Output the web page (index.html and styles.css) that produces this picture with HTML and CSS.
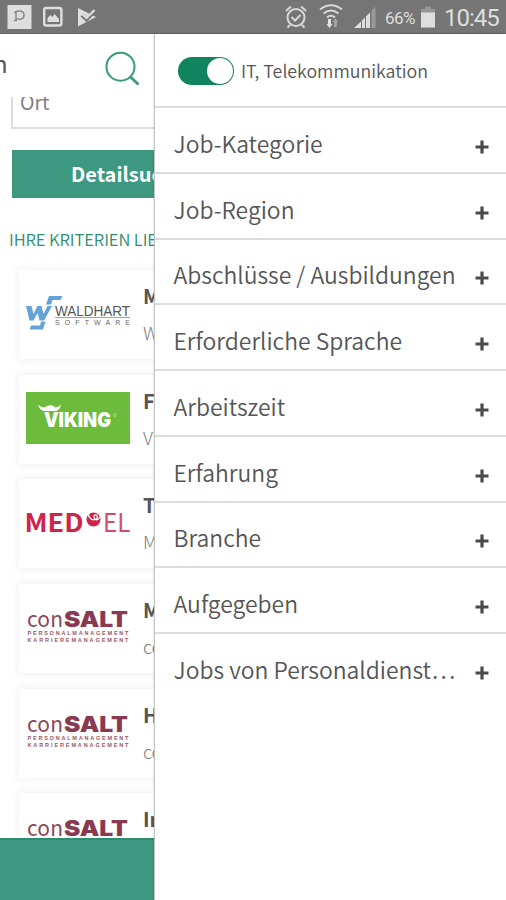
FILE: index.html
```html
<!DOCTYPE html>
<html lang="de">
<head>
    <meta charset="UTF-8">
    <meta name="viewport" content="width=device-width, initial-scale=1.0">
    <title>Jobs</title>
    <link rel="stylesheet" href="styles.css">
</head>
<body>
<svg class="symbols" width="0" height="0">
    <symbol id="plus" viewBox="0 0 14 14">
        <path d="M7 0.5V13.5M0.5 7H13.5" stroke="#4a4a4a" stroke-width="3.2" fill="none"/>
    </symbol>
    <symbol id="consalt" viewBox="0 0 104 52">
        <text x="1" y="25.5" class="con" textLength="36">con</text>
        <text x="38" y="25.5" class="salt" textLength="64" lengthAdjust="spacingAndGlyphs">SALT</text>
        <text x="1.5" y="34" class="salt-sub" textLength="101">PERSONALMANAGEMENT</text>
        <text x="1.5" y="41" class="salt-sub" textLength="101">KARRIEREMANAGEMENT</text>
    </symbol>
</svg>

<div class="statusbar">
    <svg class="status-left" width="100" height="33" viewBox="0 0 100 33">
        <rect x="7.5" y="5" width="24" height="24" fill="#dedede"/>
        <path d="M14 20.500h3M16 20.500V12.500M14.500 13c1-2 9.500-4 9.500 2.200c0 4.300-4.800 4.800-7 3.300" fill="none" stroke="#8a8a8a" stroke-width="1.500"/>
        <rect x="44.200" y="8" width="17.200" height="17.500" rx="2" fill="none" stroke="#dedede" stroke-width="2.400"/>
        <path d="M47.500 22v-4l3-3l2 2l2-3l4.500 5v3z" fill="#dedede"/>
        <path d="M78 8l18 9l-18 9.500z" fill="#dedede"/>
        <path d="M82 15l4.500 4.500l8.500-9" fill="none" stroke="#757575" stroke-width="4"/>
        <path d="M82 14l4.500 4l8-8" fill="none" stroke="#dedede" stroke-width="2.200"/>
    </svg>
    <div class="status-right">
        <svg width="98" height="33" viewBox="280 0 98 33">
            <g fill="none" stroke="#d8d8d8" stroke-width="2">
                <circle cx="296" cy="17.500" r="8.500"/>
                <path d="M291.500 17l3.500 3.500l5.500-5.500M286 11l5-4.500M306 11l-5-4.500M290 25l-2.500 2.500M302 25l2.500 2.500"/>
                <path d="M320 9.500q11-8.500 22 0M323.500 13.500q7.500-6 15 0M327 17.500q4-3.500 8 0"/>
            </g>
            <path d="M328 19h3v5h1.500l-3 4l-3-4h1.500z" fill="#e2e2e2"/>
            <path d="M334 27v-5h-1l2.500-3.500l2.500 3.500h-1.200v5z" fill="#a5a5a5"/>
            <path d="M354 28l7-6.500V28z M362 28v-7.500l3-3V28z M366 28V16.500l4-4V28z" fill="#dedede"/>
            <path d="M371.500 28V11l4-4.500V28z" fill="#999"/>
        </svg>
        <span class="percent">66%</span>
        <svg width="16" height="33" viewBox="419 0 16 33">
            <path d="M420 13V9h4V6.500h6V9h4v4z" fill="#959595"/>
            <rect x="420" y="12.500" width="14" height="15" fill="#dedede"/>
        </svg>
        <span class="time">10:45</span>
    </div>
</div>

<div class="screen">
    <div class="page">
        <div class="header">
            <span class="title">n</span>
            <svg class="search" width="36" height="36" viewBox="0 0 36 36">
                <circle cx="16.500" cy="15.700" r="14" fill="none" stroke="#379b7e" stroke-width="2"/>
                <path d="M26 25.500l8.500 8" stroke="#379b7e" stroke-width="2.800"/>
            </svg>
        </div>
        <div class="content">
            <div class="field">Ort</div>
            <div class="detail-btn">Detailsuche</div>
            <div class="result-title">IHRE KRITERIEN LIEFERN</div>

            <div class="card">
                <svg class="logo" width="104" height="52" viewBox="0 0 104 52">
                    <g fill="#65a2d7">
                        <path d="M0 19h5.500l2 8l4-8h4l2 8l4-8h4.500l-8 14.500h-4.500l-2-7.500l-4 7.500h-4z"/>
                        <path d="M23 9h13.500l-2 4h-8l-1.500 4.500h-5z"/>
                        <path d="M3.500 42.500l1.500-4h9l1-4h4.500l-2.500 8z"/>
                    </g>
                    <text x="29" y="29" class="waldhart" textLength="75" lengthAdjust="spacingAndGlyphs">WALDHART</text>
                    <path d="M29 30.500h75" stroke="#888" stroke-width="0.800"/>
                    <text x="29" y="37.500" class="software" textLength="75">SOFTWARE</text>
                </svg>
                <div class="job"><b>Mitarbeiter</b><span>Waldhart</span></div>
            </div>

            <div class="card">
                <svg class="logo" width="104" height="52" viewBox="0 0 104 52">
                    <rect width="104" height="52" fill="#6cbb3c"/>
                    <path d="M12 12.500c2 2 4 3 7 3c3-3 8-3 10 0c2 0 4-1 6-3c-1 4-2 5.500-5 6.500h-12c-3-1-5-2.500-6-6.500z" fill="#fff"/>
                    <text x="18" y="34.500" class="viking" textLength="67" lengthAdjust="spacingAndGlyphs">VIKING</text>
                    <circle cx="89" cy="23" r="1.500" fill="none" stroke="#c4e4b1" stroke-width="0.600"/>
                </svg>
                <div class="job"><b>Filialleiter</b><span>Viking</span></div>
            </div>

            <div class="card">
                <svg class="logo" width="104" height="52" viewBox="0 0 104 52">
                    <text x="-1.500" y="35.500" class="med" textLength="59" lengthAdjust="spacingAndGlyphs">MED</text>
                    <circle cx="67.500" cy="23.500" r="7" fill="#cf2349"/>
                    <path d="M62 17.500c1 5 4 7 7 6c3-1 3-4 1-4.500s-3 2-1 4s4 0 6-4" fill="none" stroke="#fff" stroke-width="1.300"/>
                    <text x="77" y="35.500" class="el" textLength="27.500" lengthAdjust="spacingAndGlyphs">EL</text>
                </svg>
                <div class="job"><b>Techniker</b><span>MED-EL</span></div>
            </div>

            <div class="card">
                <svg class="logo" width="104" height="52"><use href="#consalt"/></svg>
                <div class="job"><b>Mitarbeiter</b><span>conSALT</span></div>
            </div>

            <div class="card">
                <svg class="logo" width="104" height="52"><use href="#consalt"/></svg>
                <div class="job"><b>Hotel</b><span>conSALT</span></div>
            </div>

            <div class="card">
                <svg class="logo" width="104" height="52"><use href="#consalt"/></svg>
                <div class="job"><b>Ingenieur</b><span>conSALT</span></div>
            </div>
        </div>
        <div class="footer"></div>
    </div>

    <div class="filter">
        <div class="toggle-row">
            <div class="toggle"><div class="knob"></div></div>
            <span class="toggle-label">IT, Telekommunikation</span>
        </div>
        <div class="row"><span>Job-Kategorie</span><svg class="plus"><use href="#plus"/></svg></div>
        <div class="row"><span>Job-Region</span><svg class="plus"><use href="#plus"/></svg></div>
        <div class="row"><span>Abschlüsse / Ausbildungen</span><svg class="plus"><use href="#plus"/></svg></div>
        <div class="row"><span>Erforderliche Sprache</span><svg class="plus"><use href="#plus"/></svg></div>
        <div class="row"><span>Arbeitszeit</span><svg class="plus"><use href="#plus"/></svg></div>
        <div class="row"><span>Erfahrung</span><svg class="plus"><use href="#plus"/></svg></div>
        <div class="row"><span>Branche</span><svg class="plus"><use href="#plus"/></svg></div>
        <div class="row"><span>Aufgegeben</span><svg class="plus"><use href="#plus"/></svg></div>
        <div class="row"><span>Jobs von Personaldienst…</span><svg class="plus"><use href="#plus"/></svg></div>
    </div>
</div>
</body>
</html>
```
FILE: styles.css
```css
* {
    box-sizing: border-box;
}
body {
    margin: 0;
    height: 900px;
    overflow: hidden;
    background-color: white;
    font-family: "Noto Sans CJK SC", "Open Sans", sans-serif;
    color: #555;
}
.symbols {
    display: block;
}
svg {
    flex-shrink: 0;
}

/* status bar */
.statusbar {
    display: flex;
    justify-content: space-between;
    height: 34px;
    background-color: #757575;
    border-bottom: 1px solid #666;
    color: #dedede;
    font-family: Roboto, sans-serif;
}
.status-right {
    display: flex;
    line-height: 36px;
    padding-right: 7px;
}
.percent {
    width: 35px;
    margin-left: 7px;
    font-size: 17px;
    letter-spacing: -0.6px;
}
.time {
    width: 55px;
    margin-left: 8px;
    font-size: 24px;
    letter-spacing: -1px;
    white-space: nowrap;
}

.screen {
    display: flex;
    height: 866px;
}

/* page behind the filter */
.page {
    display: flex;
    flex-direction: column;
    width: 154px;
    overflow: hidden;
}
.header {
    display: flex;
    justify-content: space-between;
    height: 63px;
    flex-shrink: 0;
    padding: 17px 14px 0 0;
}
.title {
    font-size: 24px;
    line-height: 24px;
    margin-left: -7px;
}
.content {
    flex: 1;
    overflow: hidden;
    width: 480px;
}
.field {
    height: 32px;
    margin-left: 11px;
    padding-left: 7px;
    border-left: 2px solid #ddd;
    border-bottom: 2px solid #ddd;
    font-size: 19.500px;
    line-height: 9px;
    color: #808080;
}
.detail-btn {
    height: 48px;
    margin: 21px 0 0 12px;
    padding-left: 59px;
    background-color: #3c987e;
    color: white;
    font-size: 20px;
    font-weight: bold;
    line-height: 47px;
}
.result-title {
    margin: 29px 0 18px 9px;
    font-size: 16.600px;
    font-weight: 350;
    line-height: 25px;
    letter-spacing: -0.1px;
    color: #2a8f6e;
}
.card {
    display: flex;
    height: 89px;
    margin: 0 0 15.700px 19px;
    padding: 17px 0 0 7px;
    background-color: white;
    box-shadow: 0 0 8px 2px rgba(0, 0, 0, 0.05);
}
.job {
    display: flex;
    flex-direction: column;
    margin: -1px 0 0 13px;
}
.job b {
    font-size: 20px;
    line-height: 20px;
    color: #555;
}
.job span {
    margin-top: 16px;
    font-size: 18px;
    font-weight: 300;
    line-height: 20px;
    color: #808080;
}
.footer {
    height: 62px;
    flex-shrink: 0;
    background-color: #3c987e;
    border-top: 2px solid #2f8c70;
}

/* logos */
.waldhart {
    font: 15px "Liberation Sans", sans-serif;
    fill: #555;
}
.software {
    font: 7px "Liberation Sans", sans-serif;
    fill: #666;
}
.viking {
    font: 900 20px Inter, sans-serif;
    fill: white;
}
.med {
    font: bold 25px "Noto Sans CJK SC", sans-serif;
    fill: #cf2349;
}
.el {
    font: 25px "Noto Sans CJK SC", sans-serif;
    fill: #d84a68;
}
.con {
    font: 21px "Noto Sans CJK SC", sans-serif;
    fill: #8d485a;
}
.salt {
    font: 900 21px Inter, sans-serif;
    fill: #8a3a50;
}
.salt-sub {
    font: bold 5.500px "Liberation Sans", sans-serif;
    fill: #9a5468;
}

/* filter panel */
.filter {
    flex: 1;
    background-color: white;
    border-left: 1px solid #c4c4c4;
    box-shadow: 0 0 2px rgba(0, 0, 0, 0.2);
    z-index: 1;
}
.toggle-row {
    display: flex;
    align-items: center;
    height: 72px;
    padding: 2px 0 0 23px;
}
.toggle {
    display: flex;
    justify-content: flex-end;
    width: 56px;
    height: 28px;
    padding: 1px;
    border-radius: 14px;
    background-color: #10835f;
}
.knob {
    width: 26px;
    height: 26px;
    border-radius: 50%;
    background-color: white;
}
.toggle-label {
    margin: -2px 0 0 7px;
    font-size: 17.800px;
    font-weight: 350;
}
.row {
    display: flex;
    justify-content: space-between;
    align-items: center;
    height: 65.750px;
    padding: 6px 17px 0 18.500px;
    border-top: 2px solid #dcdcdc;
    font-size: 22.900px;
    font-weight: 350;
    white-space: nowrap;
}
.plus {
    width: 14px;
    height: 14px;
    margin-top: 8px;
}
```
